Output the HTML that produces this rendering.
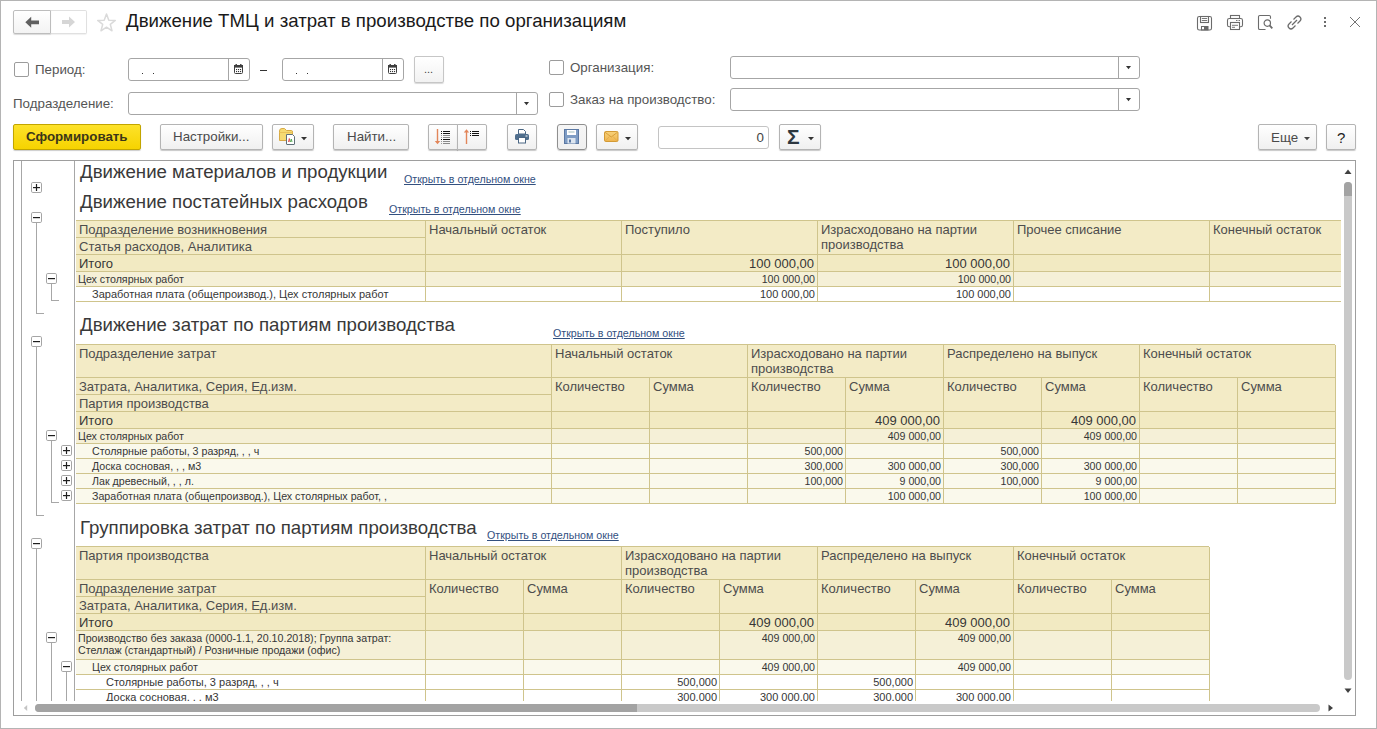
<!DOCTYPE html>
<html><head><meta charset="utf-8"><style>
html,body{margin:0;padding:0;width:1377px;height:729px;overflow:hidden;background:#fff;font-family:"Liberation Sans", sans-serif}
body>div,#rep div{position:absolute;box-sizing:content-box}
.t{position:absolute;white-space:nowrap;line-height:1;font-family:"Liberation Sans", sans-serif}
</style></head><body>
<div style="left:0px;top:0px;width:1375px;height:727px;border:1px solid #B4B4B4;background:#fff"></div>
<div style="left:51px;top:10px;width:35px;height:22px;border:1px solid #E0E0E0;border-left:0;border-radius:0 2px 2px 0;background:#fff;box-shadow:0 1px 1px rgba(0,0,0,.06)"></div>
<div style="left:13px;top:10px;width:36px;height:22px;border:1px solid #BDBDBD;border-radius:2px 0 0 2px;background:linear-gradient(#fff,#F3F3F3);box-shadow:0 1px 1px rgba(0,0,0,.15)"></div>
<svg style="position:absolute;left:24px;top:16px;" width="17" height="13" viewBox="0 0 17 13"><path d="M1.3 6.3 L7.2 0.8 L7.2 4.5 L15 4.5 L15 8.3 L7.2 8.3 L7.2 11.8 Z" fill="#606060"/></svg>
<svg style="position:absolute;left:60px;top:16px;" width="16" height="12" viewBox="0 0 16 12"><path d="M15 6 L9 0.5 L9 4 L2 4 L2 8 L9 8 L9 11.5 Z" fill="#D6D6D6"/></svg>
<svg style="position:absolute;left:96px;top:12px;" width="22" height="21" viewBox="0 0 22 21"><path d="M10.5 2 L12.8 8.2 L19.3 8.4 L14.3 12.4 L16 18.8 L10.5 15.2 L5 18.8 L6.7 12.4 L1.7 8.4 L8.2 8.2 Z" fill="none" stroke="#DADADA" stroke-width="1.5" stroke-linejoin="round"/></svg>
<div class="t" style="left:126px;top:11.80px;font-size:18.67px;color:#1A1A1A;">Движение ТМЦ и затрат в производстве по организациям</div>
<svg style="position:absolute;left:1196px;top:15px;" width="17" height="16" viewBox="0 0 17 16"><rect x="1.5" y="1.5" width="14" height="13.5" rx="1.8" fill="none" stroke="#6B6B6B" stroke-width="1.1"/><rect x="4.5" y="1.5" width="8" height="6" fill="none" stroke="#6B6B6B" stroke-width="1.1"/><line x1="5.8" y1="3.5" x2="11.2" y2="3.5" stroke="#6B6B6B" stroke-width="0.9"/><line x1="5.8" y1="5.5" x2="11.2" y2="5.5" stroke="#6B6B6B" stroke-width="0.9"/><rect x="5.5" y="11.5" width="6.5" height="3.5" fill="none" stroke="#6B6B6B" stroke-width="1"/><rect x="8" y="11.5" width="4" height="3.5" fill="#6B6B6B"/></svg>
<svg style="position:absolute;left:1226px;top:14px;" width="18" height="17" viewBox="0 0 18 17"><rect x="4.5" y="1.5" width="9" height="3" fill="none" stroke="#6B6B6B" stroke-width="1.1"/><rect x="1.5" y="4.5" width="15" height="8.3" rx="1.8" fill="none" stroke="#6B6B6B" stroke-width="1.1"/><rect x="4.5" y="8.5" width="9" height="7" fill="#fff" stroke="#6B6B6B" stroke-width="1.1"/><line x1="6" y1="11.3" x2="12" y2="11.3" stroke="#6B6B6B" stroke-width="0.9"/><line x1="6" y1="13.3" x2="9" y2="13.3" stroke="#6B6B6B" stroke-width="0.9"/><line x1="10" y1="6.5" x2="11.5" y2="6.5" stroke="#6B6B6B" stroke-width="0.9"/><line x1="12.5" y1="6.5" x2="14" y2="6.5" stroke="#6B6B6B" stroke-width="0.9"/></svg>
<svg style="position:absolute;left:1257px;top:14px;" width="18" height="17" viewBox="0 0 18 17"><path d="M13.5 4.8 L13.5 2.8 Q13.5 1.5 12.2 1.5 L2.8 1.5 Q1.5 1.5 1.5 2.8 L1.5 14.2 Q1.5 15.5 2.8 15.5 L8.5 15.5" fill="none" stroke="#6B6B6B" stroke-width="1.1"/><circle cx="10.3" cy="9.1" r="3.2" fill="none" stroke="#6B6B6B" stroke-width="1.2"/><line x1="12.6" y1="11.4" x2="15.3" y2="14.3" stroke="#6B6B6B" stroke-width="1.8"/></svg>
<svg style="position:absolute;left:1286px;top:14px;" width="18" height="17" viewBox="0 0 18 17"><path d="M7.5 5.5 L10 3 Q12 1 14 3 Q16 5 14 7 L11.5 9.5" fill="none" stroke="#6B6B6B" stroke-width="1.2"/><path d="M9.5 11.5 L7 14 Q5 16 3 14 Q1 12 3 10 L5.5 7.5" fill="none" stroke="#6B6B6B" stroke-width="1.2"/><line x1="6" y1="11" x2="11" y2="6" stroke="#6B6B6B" stroke-width="1.2"/></svg>
<svg style="position:absolute;left:1322px;top:15px;" width="6" height="14" viewBox="0 0 6 14"><rect x="2" y="2" width="2" height="2" fill="#6B6B6B"/><rect x="2" y="6" width="2" height="2" fill="#6B6B6B"/><rect x="2" y="10" width="2" height="2" fill="#6B6B6B"/></svg>
<svg style="position:absolute;left:1348px;top:15px;" width="14" height="14" viewBox="0 0 14 14"><path d="M2 2 L12 12 M12 2 L2 12" stroke="#6B6B6B" stroke-width="0.95"/></svg>
<div style="left:14px;top:62px;width:13px;height:13px;border:1px solid #9C9C9C;border-radius:2px;background:#fff"></div>
<div class="t" style="left:35px;top:62.52px;font-size:13.33px;color:#555555;">Период:</div>
<div style="left:128px;top:58px;width:120px;height:21px;border:1px solid #A6A6A6;border-radius:3px;background:#fff"></div>
<div style="left:228px;top:59px;width:1px;height:21px;background:#A6A6A6"></div>
<svg style="position:absolute;left:234px;top:64px;" width="9" height="10" viewBox="0 0 9 10"><rect x="0.5" y="1.5" width="8" height="8" rx="1" fill="#fff" stroke="#3E3E3E"/><rect x="0" y="1" width="9" height="2.6" fill="#3E3E3E"/><rect x="1.5" y="0" width="1.4" height="2" fill="#3E3E3E"/><rect x="6.1" y="0" width="1.4" height="2" fill="#3E3E3E"/><rect x="2" y="5" width="1.1" height="1.1" fill="#333"/><rect x="2" y="7" width="1.1" height="1.1" fill="#333"/><rect x="4" y="5" width="1.1" height="1.1" fill="#333"/><rect x="4" y="7" width="1.1" height="1.1" fill="#333"/><rect x="6" y="5" width="1.1" height="1.1" fill="#333"/><rect x="6" y="7" width="1.1" height="1.1" fill="#333"/></svg>
<div style="left:142px;top:73px;width:1px;height:1px;background:#333"></div>
<div style="left:153px;top:73px;width:1px;height:1px;background:#333"></div>
<div style="left:260px;top:70px;width:7px;height:1px;background:#333"></div>
<div style="left:282px;top:58px;width:120px;height:21px;border:1px solid #A6A6A6;border-radius:3px;background:#fff"></div>
<div style="left:382px;top:59px;width:1px;height:21px;background:#A6A6A6"></div>
<svg style="position:absolute;left:388px;top:64px;" width="9" height="10" viewBox="0 0 9 10"><rect x="0.5" y="1.5" width="8" height="8" rx="1" fill="#fff" stroke="#3E3E3E"/><rect x="0" y="1" width="9" height="2.6" fill="#3E3E3E"/><rect x="1.5" y="0" width="1.4" height="2" fill="#3E3E3E"/><rect x="6.1" y="0" width="1.4" height="2" fill="#3E3E3E"/><rect x="2" y="5" width="1.1" height="1.1" fill="#333"/><rect x="2" y="7" width="1.1" height="1.1" fill="#333"/><rect x="4" y="5" width="1.1" height="1.1" fill="#333"/><rect x="4" y="7" width="1.1" height="1.1" fill="#333"/><rect x="6" y="5" width="1.1" height="1.1" fill="#333"/><rect x="6" y="7" width="1.1" height="1.1" fill="#333"/></svg>
<div style="left:296px;top:73px;width:1px;height:1px;background:#333"></div>
<div style="left:307px;top:73px;width:1px;height:1px;background:#333"></div>
<div style="left:414px;top:56px;width:28px;height:25px;border:1px solid #C6C6C6;border-radius:2px;background:linear-gradient(#fff,#F2F2F2);box-shadow:0 1px 1px rgba(0,0,0,.15)"></div>
<div class="t" style="left:424px;top:63.69px;font-size:11px;color:#444;">...</div>
<div class="t" style="left:13px;top:97.12px;font-size:13.33px;color:#555555;">Подразделение:</div>
<div style="left:128px;top:92px;width:408px;height:21px;border:1px solid #A6A6A6;border-radius:3px;background:#fff"></div>
<div style="left:516px;top:93px;width:1px;height:21px;background:#A6A6A6"></div>
<svg style="position:absolute;left:524px;top:102px;" width="5" height="4" viewBox="0 0 5 4"><path d="M0 0 L5 0 L2.5 3.2 Z" fill="#333"/></svg>
<div style="left:549px;top:60px;width:13px;height:13px;border:1px solid #9C9C9C;border-radius:2px;background:#fff"></div>
<div class="t" style="left:570px;top:61.22px;font-size:13.33px;color:#555555;">Организация:</div>
<div style="left:730px;top:56px;width:408px;height:21px;border:1px solid #A6A6A6;border-radius:3px;background:#fff"></div>
<div style="left:1118px;top:57px;width:1px;height:21px;background:#A6A6A6"></div>
<svg style="position:absolute;left:1126px;top:66px;" width="5" height="4" viewBox="0 0 5 4"><path d="M0 0 L5 0 L2.5 3.2 Z" fill="#333"/></svg>
<div style="left:549px;top:92px;width:13px;height:13px;border:1px solid #9C9C9C;border-radius:2px;background:#fff"></div>
<div class="t" style="left:570px;top:93.22px;font-size:13.33px;color:#555555;">Заказ на производство:</div>
<div style="left:730px;top:88px;width:408px;height:21px;border:1px solid #A6A6A6;border-radius:3px;background:#fff"></div>
<div style="left:1118px;top:89px;width:1px;height:21px;background:#A6A6A6"></div>
<svg style="position:absolute;left:1126px;top:98px;" width="5" height="4" viewBox="0 0 5 4"><path d="M0 0 L5 0 L2.5 3.2 Z" fill="#333"/></svg>
<div style="left:13px;top:124px;width:126px;height:24px;border:1px solid #C2A500;border-radius:2px;background:linear-gradient(#FDE22A,#F6D300);box-shadow:0 1px 1px rgba(0,0,0,.2)"></div>
<div class="t" style="left:26px;top:130.22px;font-size:13.33px;color:#3B3618;font-weight:bold">Сформировать</div>
<div style="left:160px;top:124px;width:101px;height:24px;border:1px solid #B4B4B4;border-radius:2px;background:linear-gradient(#FFFFFF,#F0F0F0);box-shadow:0 1px 1px rgba(0,0,0,.22);"></div>
<div class="t" style="left:173px;top:130.22px;font-size:13.33px;color:#4A4A4A;">Настройки...</div>
<div style="left:272px;top:124px;width:40px;height:24px;border:1px solid #B4B4B4;border-radius:2px;background:linear-gradient(#FFFFFF,#F0F0F0);box-shadow:0 1px 1px rgba(0,0,0,.22);"></div>
<svg style="position:absolute;left:279px;top:128px;" width="24" height="18" viewBox="0 0 24 18"><path d="M0.5 3 Q0.5 0.5 3 0.5 L5.5 0.5 L7.5 2.5 L12.5 2.5 Q13.5 2.5 13.5 4 L13.5 12.5 L0.5 12.5 Z" fill="#F6DA72" stroke="#D8AA45" stroke-width="1"/><path d="M0.5 4.5 L13.5 4.5" stroke="#E9C25A" stroke-width="1"/><path d="M7.5 6.5 L13.5 6.5 L15.5 8.5 L15.5 16 Q15.5 16.5 15 16.5 L8 16.5 Q7.5 16.5 7.5 16 Z" fill="#fff" stroke="#5F6F78" stroke-width="1"/><path d="M9.5 14 L10.3 10.5 L11 14" fill="none" stroke="#D55" stroke-width="1"/><path d="M11.5 14 L12.3 11 L13 14" fill="none" stroke="#5A5" stroke-width="1"/></svg>
<svg style="position:absolute;left:301px;top:137px;" width="6" height="4" viewBox="0 0 6 4"><path d="M0 0 L6 0 L3.0 3.2 Z" fill="#333"/></svg>
<div style="left:333px;top:124px;width:74px;height:24px;border:1px solid #B4B4B4;border-radius:2px;background:linear-gradient(#FFFFFF,#F0F0F0);box-shadow:0 1px 1px rgba(0,0,0,.22);"></div>
<div class="t" style="left:347px;top:130.22px;font-size:13.33px;color:#4A4A4A;">Найти...</div>
<div style="left:428px;top:124px;width:28px;height:24px;border:1px solid #B4B4B4;border-radius:2px;background:linear-gradient(#FFFFFF,#F0F0F0);box-shadow:0 1px 1px rgba(0,0,0,.22);border-radius:2px 0 0 2px"></div>
<div style="left:457px;top:124px;width:28px;height:24px;border:1px solid #B4B4B4;border-radius:2px;background:linear-gradient(#FFFFFF,#F0F0F0);box-shadow:0 1px 1px rgba(0,0,0,.22);border-radius:0 2px 2px 0"></div>
<svg style="position:absolute;left:432px;top:127px;" width="22" height="20" viewBox="0 0 22 20"><line x1="5.5" y1="2" x2="5.5" y2="15" stroke="#E2865A" stroke-width="1.4"/><path d="M2.8 14 L8.2 14 L5.5 17.2 Z" fill="#E2865A"/><rect x="9" y="4" width="1" height="1" fill="#111"/><rect x="11" y="4" width="7" height="1" fill="#111"/><rect x="9" y="6" width="1" height="1" fill="#111"/><rect x="11" y="6" width="7" height="1" fill="#111"/><rect x="9" y="8" width="1" height="1" fill="#999"/><rect x="11" y="8" width="7" height="1" fill="#8A8A8A"/><rect x="9" y="10" width="1" height="1" fill="#999"/><rect x="11" y="10" width="7" height="1" fill="#8A8A8A"/><rect x="9" y="12" width="1" height="1" fill="#111"/><rect x="11" y="12" width="7" height="1" fill="#111"/><rect x="9" y="14" width="1" height="1" fill="#999"/><rect x="11" y="14" width="7" height="1" fill="#8A8A8A"/><rect x="9" y="16" width="1" height="1" fill="#999"/><rect x="11" y="16" width="7" height="1" fill="#8A8A8A"/></svg>
<svg style="position:absolute;left:461px;top:127px;" width="22" height="20" viewBox="0 0 22 20"><line x1="5.5" y1="4" x2="5.5" y2="17" stroke="#E2865A" stroke-width="1.4"/><path d="M2.8 5.5 L8.2 5.5 L5.5 2.2 Z" fill="#E2865A"/><rect x="9" y="4" width="1" height="1" fill="#111"/><rect x="11" y="4" width="7" height="1" fill="#111"/><rect x="9" y="6" width="1" height="1" fill="#111"/><rect x="11" y="6" width="7" height="1" fill="#111"/><rect x="9" y="8" width="1" height="1" fill="#111"/><rect x="11" y="8" width="7" height="1" fill="#111"/></svg>
<div style="left:507px;top:124px;width:28px;height:24px;border:1px solid #B4B4B4;border-radius:2px;background:linear-gradient(#FFFFFF,#F0F0F0);box-shadow:0 1px 1px rgba(0,0,0,.22);"></div>
<svg style="position:absolute;left:514px;top:128px;" width="16" height="16" viewBox="0 0 16 16"><path d="M4.5 1.5 L9.5 1.5 L11.5 3.5 L11.5 6 L4.5 6 Z" fill="#fff" stroke="#4A6683" stroke-width="1"/><rect x="1" y="6" width="14" height="6" rx="1.5" fill="#4F6E8D"/><rect x="11.5" y="7.5" width="2" height="1" fill="#fff"/><rect x="4.5" y="9.5" width="7" height="5.5" fill="#fff" stroke="#4A6683" stroke-width="1"/></svg>
<div style="left:557px;top:124px;width:28px;height:24px;border:1px solid #8F8F8F;border-radius:3px;background:linear-gradient(#F6F6F6,#F0F0F0);box-shadow:0 1px 1px rgba(0,0,0,.2)"></div>
<svg style="position:absolute;left:564px;top:129px;" width="16" height="16" viewBox="0 0 16 16"><rect x="0.5" y="0.5" width="14" height="14" fill="#7E9CC4" stroke="#5B78A3" stroke-width="1"/><rect x="3" y="1" width="9" height="5" fill="#fff"/><line x1="4.5" y1="3" x2="10.5" y2="3" stroke="#8AA" stroke-width=".8"/><rect x="3.5" y="9" width="8" height="5.5" fill="#DDE6F0"/><rect x="5" y="10.5" width="2" height="3" fill="#5B78A3"/></svg>
<div style="left:596px;top:124px;width:40px;height:24px;border:1px solid #B4B4B4;border-radius:2px;background:linear-gradient(#FFFFFF,#F0F0F0);box-shadow:0 1px 1px rgba(0,0,0,.22);"></div>
<svg style="position:absolute;left:604px;top:131px;" width="15" height="12" viewBox="0 0 15 12"><defs><linearGradient id="env" x1="0" y1="0" x2="0" y2="1"><stop offset="0" stop-color="#F8D27A"/><stop offset="1" stop-color="#EFB44E"/></linearGradient></defs><rect x="0.5" y="0.5" width="13.5" height="10" rx="1.2" fill="url(#env)" stroke="#D39A35" stroke-width="1"/><path d="M1 1.2 L7.25 6 L13.5 1.2" fill="none" stroke="#D39A35" stroke-width="0.9"/><path d="M1.2 10 L5.5 5.5 M13.3 10 L9 5.5" stroke="#E0A845" stroke-width=".7"/></svg>
<svg style="position:absolute;left:625px;top:137px;" width="6" height="4" viewBox="0 0 6 4"><path d="M0 0 L6 0 L3.0 3.2 Z" fill="#333"/></svg>
<div style="left:658px;top:126px;width:109px;height:21px;border:1px solid #C4C4C4;border-radius:3px;background:#fff"></div>
<div class="t" style="left:164px;width:600px;text-align:right;top:131.22px;font-size:13.33px;color:#444;">0</div>
<div style="left:779px;top:124px;width:40px;height:24px;border:1px solid #B4B4B4;border-radius:2px;background:linear-gradient(#FFFFFF,#F0F0F0);box-shadow:0 1px 1px rgba(0,0,0,.22);"></div>
<div class="t" style="left:787px;top:126.22px;font-size:21px;color:#2C3740;font-weight:bold">Σ</div>
<svg style="position:absolute;left:808px;top:137px;" width="6" height="4" viewBox="0 0 6 4"><path d="M0 0 L6 0 L3.0 3.2 Z" fill="#333"/></svg>
<div style="left:1258px;top:124px;width:57px;height:24px;border:1px solid #B4B4B4;border-radius:2px;background:linear-gradient(#FFFFFF,#F0F0F0);box-shadow:0 1px 1px rgba(0,0,0,.22);"></div>
<div class="t" style="left:1271px;top:130.72px;font-size:13.33px;color:#4A4A4A;">Еще</div>
<svg style="position:absolute;left:1304px;top:137px;" width="6" height="4" viewBox="0 0 6 4"><path d="M0 0 L6 0 L3.0 3.2 Z" fill="#444"/></svg>
<div style="left:1326px;top:124px;width:28px;height:24px;border:1px solid #B4B4B4;border-radius:2px;background:linear-gradient(#FFFFFF,#F0F0F0);box-shadow:0 1px 1px rgba(0,0,0,.22);"></div>
<div class="t" style="left:1337px;top:130.30px;font-size:15px;color:#222;">?</div>
<div style="left:13px;top:160px;width:1341px;height:554px;border:1px solid #9E9E9E;background:#fff"></div>
<div id="rep" style="left:14px;top:161px;width:1327px;height:540px;overflow:hidden">
<div style="left:7px;top:0px;width:1px;height:540px;background:#A7A7A7"></div>
<div style="left:60px;top:0px;width:1px;height:540px;background:#A7A7A7"></div>
<svg style="position:absolute;left:17px;top:21px" width="11" height="11" viewBox="0 0 11 11"><rect x="0.5" y="0.5" width="10" height="10" rx="1.3" fill="#fff" stroke="#A5A5A5"/><rect x="2" y="5" width="7" height="1.2" fill="#1E1E1E"/><rect x="4.9" y="2" width="1.2" height="7" fill="#1E1E1E"/></svg>
<svg style="position:absolute;left:17px;top:51px" width="11" height="11" viewBox="0 0 11 11"><rect x="0.5" y="0.5" width="10" height="10" rx="1.3" fill="#fff" stroke="#A5A5A5"/><rect x="2" y="5" width="7" height="1.2" fill="#1E1E1E"/></svg>
<div style="left:22px;top:62px;width:1px;height:90px;background:#A7A7A7"></div>
<div style="left:22px;top:152px;width:8px;height:1px;background:#A7A7A7"></div>
<svg style="position:absolute;left:32px;top:112px" width="11" height="11" viewBox="0 0 11 11"><rect x="0.5" y="0.5" width="10" height="10" rx="1.3" fill="#fff" stroke="#A5A5A5"/><rect x="2" y="5" width="7" height="1.2" fill="#1E1E1E"/></svg>
<div style="left:37px;top:123px;width:1px;height:16px;background:#A7A7A7"></div>
<div style="left:37px;top:139px;width:8px;height:1px;background:#A7A7A7"></div>
<svg style="position:absolute;left:17px;top:175px" width="11" height="11" viewBox="0 0 11 11"><rect x="0.5" y="0.5" width="10" height="10" rx="1.3" fill="#fff" stroke="#A5A5A5"/><rect x="2" y="5" width="7" height="1.2" fill="#1E1E1E"/></svg>
<div style="left:22px;top:186px;width:1px;height:168px;background:#A7A7A7"></div>
<div style="left:22px;top:354px;width:8px;height:1px;background:#A7A7A7"></div>
<svg style="position:absolute;left:32px;top:269px" width="11" height="11" viewBox="0 0 11 11"><rect x="0.5" y="0.5" width="10" height="10" rx="1.3" fill="#fff" stroke="#A5A5A5"/><rect x="2" y="5" width="7" height="1.2" fill="#1E1E1E"/></svg>
<div style="left:37px;top:280px;width:1px;height:61px;background:#A7A7A7"></div>
<div style="left:37px;top:341px;width:8px;height:1px;background:#A7A7A7"></div>
<svg style="position:absolute;left:47px;top:284px" width="11" height="11" viewBox="0 0 11 11"><rect x="0.5" y="0.5" width="10" height="10" rx="1.3" fill="#fff" stroke="#A5A5A5"/><rect x="2" y="5" width="7" height="1.2" fill="#1E1E1E"/><rect x="4.9" y="2" width="1.2" height="7" fill="#1E1E1E"/></svg>
<svg style="position:absolute;left:47px;top:299px" width="11" height="11" viewBox="0 0 11 11"><rect x="0.5" y="0.5" width="10" height="10" rx="1.3" fill="#fff" stroke="#A5A5A5"/><rect x="2" y="5" width="7" height="1.2" fill="#1E1E1E"/><rect x="4.9" y="2" width="1.2" height="7" fill="#1E1E1E"/></svg>
<svg style="position:absolute;left:47px;top:314px" width="11" height="11" viewBox="0 0 11 11"><rect x="0.5" y="0.5" width="10" height="10" rx="1.3" fill="#fff" stroke="#A5A5A5"/><rect x="2" y="5" width="7" height="1.2" fill="#1E1E1E"/><rect x="4.9" y="2" width="1.2" height="7" fill="#1E1E1E"/></svg>
<svg style="position:absolute;left:47px;top:329px" width="11" height="11" viewBox="0 0 11 11"><rect x="0.5" y="0.5" width="10" height="10" rx="1.3" fill="#fff" stroke="#A5A5A5"/><rect x="2" y="5" width="7" height="1.2" fill="#1E1E1E"/><rect x="4.9" y="2" width="1.2" height="7" fill="#1E1E1E"/></svg>
<svg style="position:absolute;left:17px;top:377px" width="11" height="11" viewBox="0 0 11 11"><rect x="0.5" y="0.5" width="10" height="10" rx="1.3" fill="#fff" stroke="#A5A5A5"/><rect x="2" y="5" width="7" height="1.2" fill="#1E1E1E"/></svg>
<div style="left:22px;top:388px;width:1px;height:152px;background:#A7A7A7"></div>
<svg style="position:absolute;left:32px;top:471px" width="11" height="11" viewBox="0 0 11 11"><rect x="0.5" y="0.5" width="10" height="10" rx="1.3" fill="#fff" stroke="#A5A5A5"/><rect x="2" y="5" width="7" height="1.2" fill="#1E1E1E"/></svg>
<div style="left:37px;top:482px;width:1px;height:58px;background:#A7A7A7"></div>
<svg style="position:absolute;left:47px;top:500px" width="11" height="11" viewBox="0 0 11 11"><rect x="0.5" y="0.5" width="10" height="10" rx="1.3" fill="#fff" stroke="#A5A5A5"/><rect x="2" y="5" width="7" height="1.2" fill="#1E1E1E"/></svg>
<div style="left:52px;top:511px;width:1px;height:29px;background:#A7A7A7"></div>
<div class="t" style="left:66px;top:1.60px;font-size:18.67px;color:#393939;">Движение материалов и продукции</div>
<div class="t" style="left:390px;top:12.97px;font-size:10.67px;color:#33507F;text-decoration:underline">Открыть в отдельном окне</div>
<div class="t" style="left:66px;top:32.20px;font-size:18.67px;color:#393939;">Движение постатейных расходов</div>
<div class="t" style="left:375px;top:42.97px;font-size:10.67px;color:#33507F;text-decoration:underline">Открыть в отдельном окне</div>
<div style="left:62px;top:59px;width:1265px;height:1px;background:#CFC48C"></div>
<div style="left:62px;top:60px;width:349px;height:16px;background:#F3EBC6;border-right:1px solid #CFC48C;border-bottom:1px solid #CFC48C"></div>
<div style="left:62px;top:77px;width:349px;height:16px;background:#F3EBC6;border-right:1px solid #CFC48C;border-bottom:1px solid #CFC48C"></div>
<div style="left:412px;top:60px;width:195px;height:33px;background:#F3EBC6;border-right:1px solid #CFC48C;border-bottom:1px solid #CFC48C"></div>
<div style="left:608px;top:60px;width:195px;height:33px;background:#F3EBC6;border-right:1px solid #CFC48C;border-bottom:1px solid #CFC48C"></div>
<div style="left:804px;top:60px;width:195px;height:33px;background:#F3EBC6;border-right:1px solid #CFC48C;border-bottom:1px solid #CFC48C"></div>
<div style="left:1000px;top:60px;width:195px;height:33px;background:#F3EBC6;border-right:1px solid #CFC48C;border-bottom:1px solid #CFC48C"></div>
<div style="left:1196px;top:60px;width:195px;height:33px;background:#F3EBC6;border-right:1px solid #CFC48C;border-bottom:1px solid #CFC48C"></div>
<div class="t" style="left:65px;top:62.00px;font-size:13px;color:#4D4D4D;">Подразделение возникновения</div>
<div class="t" style="left:65px;top:79.00px;font-size:13px;color:#4D4D4D;">Статья расходов, Аналитика</div>
<div class="t" style="left:415px;top:62.00px;font-size:13px;color:#4D4D4D;">Начальный остаток</div>
<div class="t" style="left:611px;top:62.00px;font-size:13px;color:#4D4D4D;">Поступило</div>
<div class="t" style="left:807px;top:62.00px;font-size:13px;color:#4D4D4D;">Израсходовано на партии</div>
<div class="t" style="left:1003px;top:62.00px;font-size:13px;color:#4D4D4D;">Прочее списание</div>
<div class="t" style="left:1199px;top:62.00px;font-size:13px;color:#4D4D4D;">Конечный остаток</div>
<div class="t" style="left:807px;top:77.00px;font-size:13px;color:#4D4D4D;">производства</div>
<div style="left:62px;top:94px;width:349px;height:16px;background:#F2EAC2;border-right:1px solid #CFC48C;border-bottom:1px solid #CFC48C"></div>
<div style="left:412px;top:94px;width:195px;height:16px;background:#F2EAC2;border-right:1px solid #CFC48C;border-bottom:1px solid #CFC48C"></div>
<div style="left:608px;top:94px;width:195px;height:16px;background:#F2EAC2;border-right:1px solid #CFC48C;border-bottom:1px solid #CFC48C"></div>
<div style="left:804px;top:94px;width:195px;height:16px;background:#F2EAC2;border-right:1px solid #CFC48C;border-bottom:1px solid #CFC48C"></div>
<div style="left:1000px;top:94px;width:195px;height:16px;background:#F2EAC2;border-right:1px solid #CFC48C;border-bottom:1px solid #CFC48C"></div>
<div style="left:1196px;top:94px;width:195px;height:16px;background:#F2EAC2;border-right:1px solid #CFC48C;border-bottom:1px solid #CFC48C"></div>
<div class="t" style="left:65px;top:95.60px;font-size:13px;color:#363636;">Итого</div>
<div class="t" style="left:200px;width:600px;text-align:right;top:95.60px;font-size:13px;color:#363636;">100 000,00</div>
<div class="t" style="left:396px;width:600px;text-align:right;top:95.60px;font-size:13px;color:#363636;">100 000,00</div>
<div style="left:62px;top:111px;width:349px;height:14px;background:#F5F0D7;border-right:1px solid #CFC48C;border-bottom:1px solid #CFC48C"></div>
<div style="left:412px;top:111px;width:195px;height:14px;background:#F5F0D7;border-right:1px solid #CFC48C;border-bottom:1px solid #CFC48C"></div>
<div style="left:608px;top:111px;width:195px;height:14px;background:#F5F0D7;border-right:1px solid #CFC48C;border-bottom:1px solid #CFC48C"></div>
<div style="left:804px;top:111px;width:195px;height:14px;background:#F5F0D7;border-right:1px solid #CFC48C;border-bottom:1px solid #CFC48C"></div>
<div style="left:1000px;top:111px;width:195px;height:14px;background:#F5F0D7;border-right:1px solid #CFC48C;border-bottom:1px solid #CFC48C"></div>
<div style="left:1196px;top:111px;width:195px;height:14px;background:#F5F0D7;border-right:1px solid #CFC48C;border-bottom:1px solid #CFC48C"></div>
<div class="t" style="left:64px;top:112.57px;font-size:10.67px;color:#363636;">Цех столярных работ</div>
<div class="t" style="left:201px;width:600px;text-align:right;top:112.57px;font-size:10.67px;color:#363636;">100 000,00</div>
<div class="t" style="left:397px;width:600px;text-align:right;top:112.57px;font-size:10.67px;color:#363636;">100 000,00</div>
<div style="left:62px;top:126px;width:349px;height:14px;background:#FFFFFF;border-right:1px solid #CFC48C;border-bottom:1px solid #CFC48C"></div>
<div style="left:412px;top:126px;width:195px;height:14px;background:#FFFFFF;border-right:1px solid #CFC48C;border-bottom:1px solid #CFC48C"></div>
<div style="left:608px;top:126px;width:195px;height:14px;background:#FFFFFF;border-right:1px solid #CFC48C;border-bottom:1px solid #CFC48C"></div>
<div style="left:804px;top:126px;width:195px;height:14px;background:#FFFFFF;border-right:1px solid #CFC48C;border-bottom:1px solid #CFC48C"></div>
<div style="left:1000px;top:126px;width:195px;height:14px;background:#FFFFFF;border-right:1px solid #CFC48C;border-bottom:1px solid #CFC48C"></div>
<div style="left:1196px;top:126px;width:195px;height:14px;background:#FFFFFF;border-right:1px solid #CFC48C;border-bottom:1px solid #CFC48C"></div>
<div class="t" style="left:78px;top:128.29px;font-size:11px;color:#363636;">Заработная плата (общепроизвод.), Цех столярных работ</div>
<div class="t" style="left:201px;width:600px;text-align:right;top:128.29px;font-size:11px;color:#363636;">100 000,00</div>
<div class="t" style="left:397px;width:600px;text-align:right;top:128.29px;font-size:11px;color:#363636;">100 000,00</div>
<div class="t" style="left:66px;top:155.30px;font-size:18.67px;color:#393939;">Движение затрат по партиям производства</div>
<div class="t" style="left:539px;top:166.97px;font-size:10.67px;color:#33507F;text-decoration:underline">Открыть в отдельном окне</div>
<div style="left:62px;top:183px;width:1259px;height:1px;background:#CFC48C"></div>
<div style="left:62px;top:184px;width:475px;height:32px;background:#F3EBC6;border-right:1px solid #CFC48C;border-bottom:1px solid #CFC48C"></div>
<div style="left:62px;top:217px;width:475px;height:16px;background:#F3EBC6;border-right:1px solid #CFC48C;border-bottom:1px solid #CFC48C"></div>
<div style="left:62px;top:234px;width:475px;height:16px;background:#F3EBC6;border-right:1px solid #CFC48C;border-bottom:1px solid #CFC48C"></div>
<div class="t" style="left:65px;top:185.50px;font-size:13px;color:#4D4D4D;">Подразделение затрат</div>
<div class="t" style="left:65px;top:219.00px;font-size:13px;color:#4D4D4D;">Затрата, Аналитика, Серия, Ед.изм.</div>
<div class="t" style="left:65px;top:236.00px;font-size:13px;color:#4D4D4D;">Партия производства</div>
<div style="left:538px;top:184px;width:195px;height:32px;background:#F3EBC6;border-right:1px solid #CFC48C;border-bottom:1px solid #CFC48C"></div>
<div class="t" style="left:541px;top:186.00px;font-size:13px;color:#4D4D4D;">Начальный остаток</div>
<div style="left:538px;top:217px;width:97px;height:33px;background:#F3EBC6;border-right:1px solid #CFC48C;border-bottom:1px solid #CFC48C"></div>
<div style="left:636px;top:217px;width:97px;height:33px;background:#F3EBC6;border-right:1px solid #CFC48C;border-bottom:1px solid #CFC48C"></div>
<div class="t" style="left:541px;top:219.00px;font-size:13px;color:#4D4D4D;">Количество</div>
<div class="t" style="left:639px;top:219.00px;font-size:13px;color:#4D4D4D;">Сумма</div>
<div style="left:734px;top:184px;width:195px;height:32px;background:#F3EBC6;border-right:1px solid #CFC48C;border-bottom:1px solid #CFC48C"></div>
<div class="t" style="left:737px;top:186.00px;font-size:13px;color:#4D4D4D;">Израсходовано на партии</div>
<div style="left:734px;top:217px;width:97px;height:33px;background:#F3EBC6;border-right:1px solid #CFC48C;border-bottom:1px solid #CFC48C"></div>
<div style="left:832px;top:217px;width:97px;height:33px;background:#F3EBC6;border-right:1px solid #CFC48C;border-bottom:1px solid #CFC48C"></div>
<div class="t" style="left:737px;top:219.00px;font-size:13px;color:#4D4D4D;">Количество</div>
<div class="t" style="left:835px;top:219.00px;font-size:13px;color:#4D4D4D;">Сумма</div>
<div style="left:930px;top:184px;width:195px;height:32px;background:#F3EBC6;border-right:1px solid #CFC48C;border-bottom:1px solid #CFC48C"></div>
<div class="t" style="left:933px;top:186.00px;font-size:13px;color:#4D4D4D;">Распределено на выпуск</div>
<div style="left:930px;top:217px;width:97px;height:33px;background:#F3EBC6;border-right:1px solid #CFC48C;border-bottom:1px solid #CFC48C"></div>
<div style="left:1028px;top:217px;width:97px;height:33px;background:#F3EBC6;border-right:1px solid #CFC48C;border-bottom:1px solid #CFC48C"></div>
<div class="t" style="left:933px;top:219.00px;font-size:13px;color:#4D4D4D;">Количество</div>
<div class="t" style="left:1031px;top:219.00px;font-size:13px;color:#4D4D4D;">Сумма</div>
<div style="left:1126px;top:184px;width:195px;height:32px;background:#F3EBC6;border-right:1px solid #CFC48C;border-bottom:1px solid #CFC48C"></div>
<div class="t" style="left:1129px;top:186.00px;font-size:13px;color:#4D4D4D;">Конечный остаток</div>
<div style="left:1126px;top:217px;width:97px;height:33px;background:#F3EBC6;border-right:1px solid #CFC48C;border-bottom:1px solid #CFC48C"></div>
<div style="left:1224px;top:217px;width:97px;height:33px;background:#F3EBC6;border-right:1px solid #CFC48C;border-bottom:1px solid #CFC48C"></div>
<div class="t" style="left:1129px;top:219.00px;font-size:13px;color:#4D4D4D;">Количество</div>
<div class="t" style="left:1227px;top:219.00px;font-size:13px;color:#4D4D4D;">Сумма</div>
<div class="t" style="left:737px;top:201.00px;font-size:13px;color:#4D4D4D;">производства</div>
<div style="left:62px;top:251px;width:475px;height:16px;background:#F2EAC2;border-right:1px solid #CFC48C;border-bottom:1px solid #CFC48C"></div>
<div style="left:538px;top:251px;width:97px;height:16px;background:#F2EAC2;border-right:1px solid #CFC48C;border-bottom:1px solid #CFC48C"></div>
<div style="left:636px;top:251px;width:97px;height:16px;background:#F2EAC2;border-right:1px solid #CFC48C;border-bottom:1px solid #CFC48C"></div>
<div style="left:734px;top:251px;width:97px;height:16px;background:#F2EAC2;border-right:1px solid #CFC48C;border-bottom:1px solid #CFC48C"></div>
<div style="left:832px;top:251px;width:97px;height:16px;background:#F2EAC2;border-right:1px solid #CFC48C;border-bottom:1px solid #CFC48C"></div>
<div style="left:930px;top:251px;width:97px;height:16px;background:#F2EAC2;border-right:1px solid #CFC48C;border-bottom:1px solid #CFC48C"></div>
<div style="left:1028px;top:251px;width:97px;height:16px;background:#F2EAC2;border-right:1px solid #CFC48C;border-bottom:1px solid #CFC48C"></div>
<div style="left:1126px;top:251px;width:97px;height:16px;background:#F2EAC2;border-right:1px solid #CFC48C;border-bottom:1px solid #CFC48C"></div>
<div style="left:1224px;top:251px;width:97px;height:16px;background:#F2EAC2;border-right:1px solid #CFC48C;border-bottom:1px solid #CFC48C"></div>
<div class="t" style="left:65px;top:252.60px;font-size:13px;color:#363636;">Итого</div>
<div class="t" style="left:326px;width:600px;text-align:right;top:252.60px;font-size:13px;color:#363636;">409 000,00</div>
<div class="t" style="left:522px;width:600px;text-align:right;top:252.60px;font-size:13px;color:#363636;">409 000,00</div>
<div style="left:62px;top:268px;width:475px;height:14px;background:#F5F0D7;border-right:1px solid #CFC48C;border-bottom:1px solid #CFC48C"></div>
<div style="left:538px;top:268px;width:97px;height:14px;background:#F5F0D7;border-right:1px solid #CFC48C;border-bottom:1px solid #CFC48C"></div>
<div style="left:636px;top:268px;width:97px;height:14px;background:#F5F0D7;border-right:1px solid #CFC48C;border-bottom:1px solid #CFC48C"></div>
<div style="left:734px;top:268px;width:97px;height:14px;background:#F5F0D7;border-right:1px solid #CFC48C;border-bottom:1px solid #CFC48C"></div>
<div style="left:832px;top:268px;width:97px;height:14px;background:#F5F0D7;border-right:1px solid #CFC48C;border-bottom:1px solid #CFC48C"></div>
<div style="left:930px;top:268px;width:97px;height:14px;background:#F5F0D7;border-right:1px solid #CFC48C;border-bottom:1px solid #CFC48C"></div>
<div style="left:1028px;top:268px;width:97px;height:14px;background:#F5F0D7;border-right:1px solid #CFC48C;border-bottom:1px solid #CFC48C"></div>
<div style="left:1126px;top:268px;width:97px;height:14px;background:#F5F0D7;border-right:1px solid #CFC48C;border-bottom:1px solid #CFC48C"></div>
<div style="left:1224px;top:268px;width:97px;height:14px;background:#F5F0D7;border-right:1px solid #CFC48C;border-bottom:1px solid #CFC48C"></div>
<div class="t" style="left:64px;top:269.57px;font-size:10.67px;color:#363636;">Цех столярных работ</div>
<div class="t" style="left:327px;width:600px;text-align:right;top:269.57px;font-size:10.67px;color:#363636;">409 000,00</div>
<div class="t" style="left:523px;width:600px;text-align:right;top:269.57px;font-size:10.67px;color:#363636;">409 000,00</div>
<div style="left:62px;top:283px;width:475px;height:14px;background:#FAF9EC;border-right:1px solid #CFC48C;border-bottom:1px solid #CFC48C"></div>
<div style="left:538px;top:283px;width:97px;height:14px;background:#FAF9EC;border-right:1px solid #CFC48C;border-bottom:1px solid #CFC48C"></div>
<div style="left:636px;top:283px;width:97px;height:14px;background:#FAF9EC;border-right:1px solid #CFC48C;border-bottom:1px solid #CFC48C"></div>
<div style="left:734px;top:283px;width:97px;height:14px;background:#FAF9EC;border-right:1px solid #CFC48C;border-bottom:1px solid #CFC48C"></div>
<div style="left:832px;top:283px;width:97px;height:14px;background:#FAF9EC;border-right:1px solid #CFC48C;border-bottom:1px solid #CFC48C"></div>
<div style="left:930px;top:283px;width:97px;height:14px;background:#FAF9EC;border-right:1px solid #CFC48C;border-bottom:1px solid #CFC48C"></div>
<div style="left:1028px;top:283px;width:97px;height:14px;background:#FAF9EC;border-right:1px solid #CFC48C;border-bottom:1px solid #CFC48C"></div>
<div style="left:1126px;top:283px;width:97px;height:14px;background:#FAF9EC;border-right:1px solid #CFC48C;border-bottom:1px solid #CFC48C"></div>
<div style="left:1224px;top:283px;width:97px;height:14px;background:#FAF9EC;border-right:1px solid #CFC48C;border-bottom:1px solid #CFC48C"></div>
<div class="t" style="left:78px;top:284.57px;font-size:10.67px;color:#363636;">Столярные работы, 3 разряд, , , ч</div>
<div class="t" style="left:229px;width:600px;text-align:right;top:284.57px;font-size:10.67px;color:#363636;">500,000</div>
<div class="t" style="left:425px;width:600px;text-align:right;top:284.57px;font-size:10.67px;color:#363636;">500,000</div>
<div style="left:62px;top:298px;width:475px;height:14px;background:#FAF9EC;border-right:1px solid #CFC48C;border-bottom:1px solid #CFC48C"></div>
<div style="left:538px;top:298px;width:97px;height:14px;background:#FAF9EC;border-right:1px solid #CFC48C;border-bottom:1px solid #CFC48C"></div>
<div style="left:636px;top:298px;width:97px;height:14px;background:#FAF9EC;border-right:1px solid #CFC48C;border-bottom:1px solid #CFC48C"></div>
<div style="left:734px;top:298px;width:97px;height:14px;background:#FAF9EC;border-right:1px solid #CFC48C;border-bottom:1px solid #CFC48C"></div>
<div style="left:832px;top:298px;width:97px;height:14px;background:#FAF9EC;border-right:1px solid #CFC48C;border-bottom:1px solid #CFC48C"></div>
<div style="left:930px;top:298px;width:97px;height:14px;background:#FAF9EC;border-right:1px solid #CFC48C;border-bottom:1px solid #CFC48C"></div>
<div style="left:1028px;top:298px;width:97px;height:14px;background:#FAF9EC;border-right:1px solid #CFC48C;border-bottom:1px solid #CFC48C"></div>
<div style="left:1126px;top:298px;width:97px;height:14px;background:#FAF9EC;border-right:1px solid #CFC48C;border-bottom:1px solid #CFC48C"></div>
<div style="left:1224px;top:298px;width:97px;height:14px;background:#FAF9EC;border-right:1px solid #CFC48C;border-bottom:1px solid #CFC48C"></div>
<div class="t" style="left:78px;top:299.57px;font-size:10.67px;color:#363636;">Доска сосновая, , , м3</div>
<div class="t" style="left:229px;width:600px;text-align:right;top:299.57px;font-size:10.67px;color:#363636;">300,000</div>
<div class="t" style="left:327px;width:600px;text-align:right;top:299.57px;font-size:10.67px;color:#363636;">300 000,00</div>
<div class="t" style="left:425px;width:600px;text-align:right;top:299.57px;font-size:10.67px;color:#363636;">300,000</div>
<div class="t" style="left:523px;width:600px;text-align:right;top:299.57px;font-size:10.67px;color:#363636;">300 000,00</div>
<div style="left:62px;top:313px;width:475px;height:14px;background:#FAF9EC;border-right:1px solid #CFC48C;border-bottom:1px solid #CFC48C"></div>
<div style="left:538px;top:313px;width:97px;height:14px;background:#FAF9EC;border-right:1px solid #CFC48C;border-bottom:1px solid #CFC48C"></div>
<div style="left:636px;top:313px;width:97px;height:14px;background:#FAF9EC;border-right:1px solid #CFC48C;border-bottom:1px solid #CFC48C"></div>
<div style="left:734px;top:313px;width:97px;height:14px;background:#FAF9EC;border-right:1px solid #CFC48C;border-bottom:1px solid #CFC48C"></div>
<div style="left:832px;top:313px;width:97px;height:14px;background:#FAF9EC;border-right:1px solid #CFC48C;border-bottom:1px solid #CFC48C"></div>
<div style="left:930px;top:313px;width:97px;height:14px;background:#FAF9EC;border-right:1px solid #CFC48C;border-bottom:1px solid #CFC48C"></div>
<div style="left:1028px;top:313px;width:97px;height:14px;background:#FAF9EC;border-right:1px solid #CFC48C;border-bottom:1px solid #CFC48C"></div>
<div style="left:1126px;top:313px;width:97px;height:14px;background:#FAF9EC;border-right:1px solid #CFC48C;border-bottom:1px solid #CFC48C"></div>
<div style="left:1224px;top:313px;width:97px;height:14px;background:#FAF9EC;border-right:1px solid #CFC48C;border-bottom:1px solid #CFC48C"></div>
<div class="t" style="left:78px;top:314.57px;font-size:10.67px;color:#363636;">Лак древесный, , , л.</div>
<div class="t" style="left:229px;width:600px;text-align:right;top:314.57px;font-size:10.67px;color:#363636;">100,000</div>
<div class="t" style="left:327px;width:600px;text-align:right;top:314.57px;font-size:10.67px;color:#363636;">9 000,00</div>
<div class="t" style="left:425px;width:600px;text-align:right;top:314.57px;font-size:10.67px;color:#363636;">100,000</div>
<div class="t" style="left:523px;width:600px;text-align:right;top:314.57px;font-size:10.67px;color:#363636;">9 000,00</div>
<div style="left:62px;top:328px;width:475px;height:14px;background:#FAF9EC;border-right:1px solid #CFC48C;border-bottom:1px solid #CFC48C"></div>
<div style="left:538px;top:328px;width:97px;height:14px;background:#FAF9EC;border-right:1px solid #CFC48C;border-bottom:1px solid #CFC48C"></div>
<div style="left:636px;top:328px;width:97px;height:14px;background:#FAF9EC;border-right:1px solid #CFC48C;border-bottom:1px solid #CFC48C"></div>
<div style="left:734px;top:328px;width:97px;height:14px;background:#FAF9EC;border-right:1px solid #CFC48C;border-bottom:1px solid #CFC48C"></div>
<div style="left:832px;top:328px;width:97px;height:14px;background:#FAF9EC;border-right:1px solid #CFC48C;border-bottom:1px solid #CFC48C"></div>
<div style="left:930px;top:328px;width:97px;height:14px;background:#FAF9EC;border-right:1px solid #CFC48C;border-bottom:1px solid #CFC48C"></div>
<div style="left:1028px;top:328px;width:97px;height:14px;background:#FAF9EC;border-right:1px solid #CFC48C;border-bottom:1px solid #CFC48C"></div>
<div style="left:1126px;top:328px;width:97px;height:14px;background:#FAF9EC;border-right:1px solid #CFC48C;border-bottom:1px solid #CFC48C"></div>
<div style="left:1224px;top:328px;width:97px;height:14px;background:#FAF9EC;border-right:1px solid #CFC48C;border-bottom:1px solid #CFC48C"></div>
<div class="t" style="left:78px;top:329.57px;font-size:10.67px;color:#363636;">Заработная плата (общепроизвод.), Цех столярных работ, ,</div>
<div class="t" style="left:327px;width:600px;text-align:right;top:329.57px;font-size:10.67px;color:#363636;">100 000,00</div>
<div class="t" style="left:523px;width:600px;text-align:right;top:329.57px;font-size:10.67px;color:#363636;">100 000,00</div>
<div class="t" style="left:66px;top:357.80px;font-size:18.67px;color:#393939;">Группировка затрат по партиям производства</div>
<div class="t" style="left:473px;top:368.97px;font-size:10.67px;color:#33507F;text-decoration:underline">Открыть в отдельном окне</div>
<div style="left:62px;top:385px;width:1133px;height:1px;background:#CFC48C"></div>
<div style="left:62px;top:386px;width:349px;height:32px;background:#F3EBC6;border-right:1px solid #CFC48C;border-bottom:1px solid #CFC48C"></div>
<div style="left:62px;top:419px;width:349px;height:16px;background:#F3EBC6;border-right:1px solid #CFC48C;border-bottom:1px solid #CFC48C"></div>
<div style="left:62px;top:436px;width:349px;height:16px;background:#F3EBC6;border-right:1px solid #CFC48C;border-bottom:1px solid #CFC48C"></div>
<div class="t" style="left:65px;top:387.50px;font-size:13px;color:#4D4D4D;">Партия производства</div>
<div class="t" style="left:65px;top:421.00px;font-size:13px;color:#4D4D4D;">Подразделение затрат</div>
<div class="t" style="left:65px;top:438.00px;font-size:13px;color:#4D4D4D;">Затрата, Аналитика, Серия, Ед.изм.</div>
<div style="left:412px;top:386px;width:195px;height:32px;background:#F3EBC6;border-right:1px solid #CFC48C;border-bottom:1px solid #CFC48C"></div>
<div class="t" style="left:415px;top:388.00px;font-size:13px;color:#4D4D4D;">Начальный остаток</div>
<div style="left:412px;top:419px;width:97px;height:33px;background:#F3EBC6;border-right:1px solid #CFC48C;border-bottom:1px solid #CFC48C"></div>
<div style="left:510px;top:419px;width:97px;height:33px;background:#F3EBC6;border-right:1px solid #CFC48C;border-bottom:1px solid #CFC48C"></div>
<div class="t" style="left:415px;top:421.00px;font-size:13px;color:#4D4D4D;">Количество</div>
<div class="t" style="left:513px;top:421.00px;font-size:13px;color:#4D4D4D;">Сумма</div>
<div style="left:608px;top:386px;width:195px;height:32px;background:#F3EBC6;border-right:1px solid #CFC48C;border-bottom:1px solid #CFC48C"></div>
<div class="t" style="left:611px;top:388.00px;font-size:13px;color:#4D4D4D;">Израсходовано на партии</div>
<div style="left:608px;top:419px;width:97px;height:33px;background:#F3EBC6;border-right:1px solid #CFC48C;border-bottom:1px solid #CFC48C"></div>
<div style="left:706px;top:419px;width:97px;height:33px;background:#F3EBC6;border-right:1px solid #CFC48C;border-bottom:1px solid #CFC48C"></div>
<div class="t" style="left:611px;top:421.00px;font-size:13px;color:#4D4D4D;">Количество</div>
<div class="t" style="left:709px;top:421.00px;font-size:13px;color:#4D4D4D;">Сумма</div>
<div style="left:804px;top:386px;width:195px;height:32px;background:#F3EBC6;border-right:1px solid #CFC48C;border-bottom:1px solid #CFC48C"></div>
<div class="t" style="left:807px;top:388.00px;font-size:13px;color:#4D4D4D;">Распределено на выпуск</div>
<div style="left:804px;top:419px;width:97px;height:33px;background:#F3EBC6;border-right:1px solid #CFC48C;border-bottom:1px solid #CFC48C"></div>
<div style="left:902px;top:419px;width:97px;height:33px;background:#F3EBC6;border-right:1px solid #CFC48C;border-bottom:1px solid #CFC48C"></div>
<div class="t" style="left:807px;top:421.00px;font-size:13px;color:#4D4D4D;">Количество</div>
<div class="t" style="left:905px;top:421.00px;font-size:13px;color:#4D4D4D;">Сумма</div>
<div style="left:1000px;top:386px;width:195px;height:32px;background:#F3EBC6;border-right:1px solid #CFC48C;border-bottom:1px solid #CFC48C"></div>
<div class="t" style="left:1003px;top:388.00px;font-size:13px;color:#4D4D4D;">Конечный остаток</div>
<div style="left:1000px;top:419px;width:97px;height:33px;background:#F3EBC6;border-right:1px solid #CFC48C;border-bottom:1px solid #CFC48C"></div>
<div style="left:1098px;top:419px;width:97px;height:33px;background:#F3EBC6;border-right:1px solid #CFC48C;border-bottom:1px solid #CFC48C"></div>
<div class="t" style="left:1003px;top:421.00px;font-size:13px;color:#4D4D4D;">Количество</div>
<div class="t" style="left:1101px;top:421.00px;font-size:13px;color:#4D4D4D;">Сумма</div>
<div class="t" style="left:611px;top:403.00px;font-size:13px;color:#4D4D4D;">производства</div>
<div style="left:62px;top:453px;width:349px;height:16px;background:#F2EAC2;border-right:1px solid #CFC48C;border-bottom:1px solid #CFC48C"></div>
<div style="left:412px;top:453px;width:97px;height:16px;background:#F2EAC2;border-right:1px solid #CFC48C;border-bottom:1px solid #CFC48C"></div>
<div style="left:510px;top:453px;width:97px;height:16px;background:#F2EAC2;border-right:1px solid #CFC48C;border-bottom:1px solid #CFC48C"></div>
<div style="left:608px;top:453px;width:97px;height:16px;background:#F2EAC2;border-right:1px solid #CFC48C;border-bottom:1px solid #CFC48C"></div>
<div style="left:706px;top:453px;width:97px;height:16px;background:#F2EAC2;border-right:1px solid #CFC48C;border-bottom:1px solid #CFC48C"></div>
<div style="left:804px;top:453px;width:97px;height:16px;background:#F2EAC2;border-right:1px solid #CFC48C;border-bottom:1px solid #CFC48C"></div>
<div style="left:902px;top:453px;width:97px;height:16px;background:#F2EAC2;border-right:1px solid #CFC48C;border-bottom:1px solid #CFC48C"></div>
<div style="left:1000px;top:453px;width:97px;height:16px;background:#F2EAC2;border-right:1px solid #CFC48C;border-bottom:1px solid #CFC48C"></div>
<div style="left:1098px;top:453px;width:97px;height:16px;background:#F2EAC2;border-right:1px solid #CFC48C;border-bottom:1px solid #CFC48C"></div>
<div class="t" style="left:65px;top:454.60px;font-size:13px;color:#363636;">Итого</div>
<div class="t" style="left:200px;width:600px;text-align:right;top:454.60px;font-size:13px;color:#363636;">409 000,00</div>
<div class="t" style="left:396px;width:600px;text-align:right;top:454.60px;font-size:13px;color:#363636;">409 000,00</div>
<div style="left:62px;top:470px;width:349px;height:28px;background:#F5F0D7;border-right:1px solid #CFC48C;border-bottom:1px solid #CFC48C"></div>
<div style="left:412px;top:470px;width:97px;height:28px;background:#F5F0D7;border-right:1px solid #CFC48C;border-bottom:1px solid #CFC48C"></div>
<div style="left:510px;top:470px;width:97px;height:28px;background:#F5F0D7;border-right:1px solid #CFC48C;border-bottom:1px solid #CFC48C"></div>
<div style="left:608px;top:470px;width:97px;height:28px;background:#F5F0D7;border-right:1px solid #CFC48C;border-bottom:1px solid #CFC48C"></div>
<div style="left:706px;top:470px;width:97px;height:28px;background:#F5F0D7;border-right:1px solid #CFC48C;border-bottom:1px solid #CFC48C"></div>
<div style="left:804px;top:470px;width:97px;height:28px;background:#F5F0D7;border-right:1px solid #CFC48C;border-bottom:1px solid #CFC48C"></div>
<div style="left:902px;top:470px;width:97px;height:28px;background:#F5F0D7;border-right:1px solid #CFC48C;border-bottom:1px solid #CFC48C"></div>
<div style="left:1000px;top:470px;width:97px;height:28px;background:#F5F0D7;border-right:1px solid #CFC48C;border-bottom:1px solid #CFC48C"></div>
<div style="left:1098px;top:470px;width:97px;height:28px;background:#F5F0D7;border-right:1px solid #CFC48C;border-bottom:1px solid #CFC48C"></div>
<div class="t" style="left:64px;top:471.57px;font-size:10.67px;color:#363636;">Производство без заказа (0000-1.1, 20.10.2018); Группа затрат:</div>
<div class="t" style="left:201px;width:600px;text-align:right;top:471.57px;font-size:10.67px;color:#363636;">409 000,00</div>
<div class="t" style="left:397px;width:600px;text-align:right;top:471.57px;font-size:10.67px;color:#363636;">409 000,00</div>
<div style="left:62px;top:499px;width:349px;height:14px;background:#FAF9EC;border-right:1px solid #CFC48C;border-bottom:1px solid #CFC48C"></div>
<div style="left:412px;top:499px;width:97px;height:14px;background:#FAF9EC;border-right:1px solid #CFC48C;border-bottom:1px solid #CFC48C"></div>
<div style="left:510px;top:499px;width:97px;height:14px;background:#FAF9EC;border-right:1px solid #CFC48C;border-bottom:1px solid #CFC48C"></div>
<div style="left:608px;top:499px;width:97px;height:14px;background:#FAF9EC;border-right:1px solid #CFC48C;border-bottom:1px solid #CFC48C"></div>
<div style="left:706px;top:499px;width:97px;height:14px;background:#FAF9EC;border-right:1px solid #CFC48C;border-bottom:1px solid #CFC48C"></div>
<div style="left:804px;top:499px;width:97px;height:14px;background:#FAF9EC;border-right:1px solid #CFC48C;border-bottom:1px solid #CFC48C"></div>
<div style="left:902px;top:499px;width:97px;height:14px;background:#FAF9EC;border-right:1px solid #CFC48C;border-bottom:1px solid #CFC48C"></div>
<div style="left:1000px;top:499px;width:97px;height:14px;background:#FAF9EC;border-right:1px solid #CFC48C;border-bottom:1px solid #CFC48C"></div>
<div style="left:1098px;top:499px;width:97px;height:14px;background:#FAF9EC;border-right:1px solid #CFC48C;border-bottom:1px solid #CFC48C"></div>
<div class="t" style="left:78px;top:500.57px;font-size:10.67px;color:#363636;">Цех столярных работ</div>
<div class="t" style="left:201px;width:600px;text-align:right;top:500.57px;font-size:10.67px;color:#363636;">409 000,00</div>
<div class="t" style="left:397px;width:600px;text-align:right;top:500.57px;font-size:10.67px;color:#363636;">409 000,00</div>
<div style="left:62px;top:514px;width:349px;height:14px;background:#FFFFFF;border-right:1px solid #CFC48C;border-bottom:1px solid #CFC48C"></div>
<div style="left:412px;top:514px;width:97px;height:14px;background:#FFFFFF;border-right:1px solid #CFC48C;border-bottom:1px solid #CFC48C"></div>
<div style="left:510px;top:514px;width:97px;height:14px;background:#FFFFFF;border-right:1px solid #CFC48C;border-bottom:1px solid #CFC48C"></div>
<div style="left:608px;top:514px;width:97px;height:14px;background:#FFFFFF;border-right:1px solid #CFC48C;border-bottom:1px solid #CFC48C"></div>
<div style="left:706px;top:514px;width:97px;height:14px;background:#FFFFFF;border-right:1px solid #CFC48C;border-bottom:1px solid #CFC48C"></div>
<div style="left:804px;top:514px;width:97px;height:14px;background:#FFFFFF;border-right:1px solid #CFC48C;border-bottom:1px solid #CFC48C"></div>
<div style="left:902px;top:514px;width:97px;height:14px;background:#FFFFFF;border-right:1px solid #CFC48C;border-bottom:1px solid #CFC48C"></div>
<div style="left:1000px;top:514px;width:97px;height:14px;background:#FFFFFF;border-right:1px solid #CFC48C;border-bottom:1px solid #CFC48C"></div>
<div style="left:1098px;top:514px;width:97px;height:14px;background:#FFFFFF;border-right:1px solid #CFC48C;border-bottom:1px solid #CFC48C"></div>
<div class="t" style="left:92px;top:516.29px;font-size:11px;color:#363636;">Столярные работы, 3 разряд, , , ч</div>
<div class="t" style="left:103px;width:600px;text-align:right;top:516.29px;font-size:11px;color:#363636;">500,000</div>
<div class="t" style="left:299px;width:600px;text-align:right;top:516.29px;font-size:11px;color:#363636;">500,000</div>
<div style="left:62px;top:529px;width:349px;height:14px;background:#FFFFFF;border-right:1px solid #CFC48C;border-bottom:1px solid #CFC48C"></div>
<div style="left:412px;top:529px;width:97px;height:14px;background:#FFFFFF;border-right:1px solid #CFC48C;border-bottom:1px solid #CFC48C"></div>
<div style="left:510px;top:529px;width:97px;height:14px;background:#FFFFFF;border-right:1px solid #CFC48C;border-bottom:1px solid #CFC48C"></div>
<div style="left:608px;top:529px;width:97px;height:14px;background:#FFFFFF;border-right:1px solid #CFC48C;border-bottom:1px solid #CFC48C"></div>
<div style="left:706px;top:529px;width:97px;height:14px;background:#FFFFFF;border-right:1px solid #CFC48C;border-bottom:1px solid #CFC48C"></div>
<div style="left:804px;top:529px;width:97px;height:14px;background:#FFFFFF;border-right:1px solid #CFC48C;border-bottom:1px solid #CFC48C"></div>
<div style="left:902px;top:529px;width:97px;height:14px;background:#FFFFFF;border-right:1px solid #CFC48C;border-bottom:1px solid #CFC48C"></div>
<div style="left:1000px;top:529px;width:97px;height:14px;background:#FFFFFF;border-right:1px solid #CFC48C;border-bottom:1px solid #CFC48C"></div>
<div style="left:1098px;top:529px;width:97px;height:14px;background:#FFFFFF;border-right:1px solid #CFC48C;border-bottom:1px solid #CFC48C"></div>
<div class="t" style="left:92px;top:531.29px;font-size:11px;color:#363636;">Доска сосновая, , , м3</div>
<div class="t" style="left:103px;width:600px;text-align:right;top:531.29px;font-size:11px;color:#363636;">300,000</div>
<div class="t" style="left:201px;width:600px;text-align:right;top:531.29px;font-size:11px;color:#363636;">300 000,00</div>
<div class="t" style="left:299px;width:600px;text-align:right;top:531.29px;font-size:11px;color:#363636;">300,000</div>
<div class="t" style="left:397px;width:600px;text-align:right;top:531.29px;font-size:11px;color:#363636;">300 000,00</div>
<div class="t" style="left:64px;top:483.97px;font-size:10.67px;color:#363636;">Стеллаж (стандартный) / Розничные продажи (офис)</div>
</div>
<div style="left:1344px;top:182px;width:8px;height:498px;background:#C9C9C9;border-radius:4px"></div>
<div style="left:1344px;top:182px;width:8px;height:14px;background:#A3A3A3;border-radius:4px 4px 0 0"></div>
<svg style="position:absolute;left:1344px;top:169px;" width="8" height="6" viewBox="0 0 8 6"><path d="M0.5 5 L7.5 5 L4 0.5 Z" fill="#404040"/></svg>
<svg style="position:absolute;left:1344px;top:688px;" width="8" height="6" viewBox="0 0 8 6"><path d="M0.5 0.5 L7.5 0.5 L4 5 Z" fill="#404040"/></svg>
<div style="left:35px;top:704px;width:1285px;height:8px;background:#C9C9C9;border-radius:4px"></div>
<div style="left:35px;top:704px;width:602px;height:8px;background:#A3A3A3;border-radius:4px 0 0 4px"></div>
<svg style="position:absolute;left:23px;top:704px;" width="6" height="8" viewBox="0 0 6 8"><path d="M4.2 1 L4.2 7 L0.8 4 Z" fill="#C4C4C4"/></svg>
<svg style="position:absolute;left:1328px;top:704px;" width="6" height="8" viewBox="0 0 6 8"><path d="M0.5 0.5 L0.5 7.5 L5 4 Z" fill="#404040"/></svg>
</body></html>
